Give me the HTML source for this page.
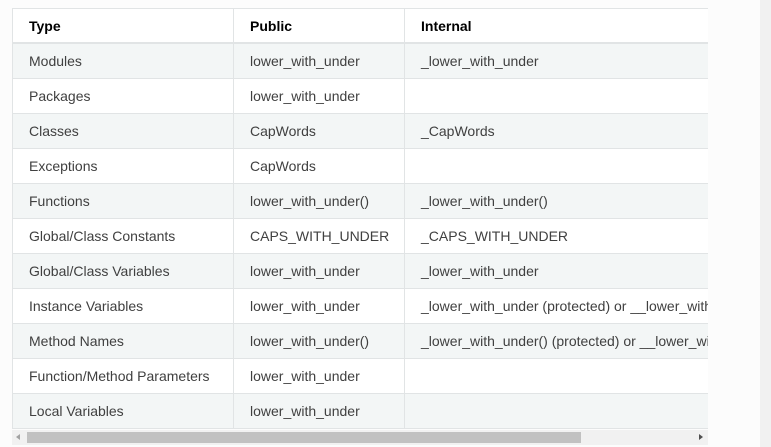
<!DOCTYPE html>
<html><head><style>
body{margin:0;width:771px;height:447px;background:#fcfcfc;overflow:hidden;font-family:"Liberation Sans",sans-serif;position:relative}
.strip{position:absolute;left:760px;top:0;width:11px;height:447px;background:#f1f1f1}
.wrap{position:absolute;left:12px;top:8px;width:696px;height:422px;overflow:hidden}
table{border-collapse:collapse;width:1000px;font-size:14px;color:#404040}
td,th{border:1px solid #e1e4e5;height:34px;padding:0 0 0 16px;text-align:left;white-space:nowrap;vertical-align:middle}
th{font-weight:bold;color:#000;background:#fff;border-bottom:2px solid #e1e4e5;height:33px}
tr:nth-child(even) td{background:#f3f6f6}
tr:nth-child(odd) td{background:#fff}
.c1{width:204px}.c2{width:154px}
.sb{position:absolute;left:12px;top:430px;width:696px;height:15px;background:#f1f1f1}
.th{position:absolute;left:15px;top:2px;width:554px;height:11px;background:#c1c1c1}
.al{position:absolute;left:4px;top:4px;width:0;height:0;border:3px solid transparent;border-right:4px solid #a3a3a3;border-left:0}
.ar{position:absolute;right:5px;top:4px;width:0;height:0;border:3px solid transparent;border-left:4px solid #505050;border-right:0}
</style></head><body>
<div class="strip"></div>
<div class="wrap"><table>
<tr><th class="c1">Type</th><th class="c2">Public</th><th>Internal</th></tr>
<tr><td>Modules</td><td>lower_with_under</td><td>_lower_with_under</td></tr>
<tr><td>Packages</td><td>lower_with_under</td><td></td></tr>
<tr><td>Classes</td><td>CapWords</td><td>_CapWords</td></tr>
<tr><td>Exceptions</td><td>CapWords</td><td></td></tr>
<tr><td>Functions</td><td>lower_with_under()</td><td>_lower_with_under()</td></tr>
<tr><td>Global/Class Constants</td><td>CAPS_WITH_UNDER</td><td>_CAPS_WITH_UNDER</td></tr>
<tr><td>Global/Class Variables</td><td>lower_with_under</td><td>_lower_with_under</td></tr>
<tr><td>Instance Variables</td><td>lower_with_under</td><td>_lower_with_under (protected) or __lower_with_under (private)</td></tr>
<tr><td>Method Names</td><td>lower_with_under()</td><td>_lower_with_under() (protected) or __lower_with_under() (private)</td></tr>
<tr><td>Function/Method Parameters</td><td>lower_with_under</td><td></td></tr>
<tr><td>Local Variables</td><td>lower_with_under</td><td></td></tr>
</table></div>
<div class="sb"><div class="al"></div><div class="th"></div><div class="ar"></div></div>
</body></html>
